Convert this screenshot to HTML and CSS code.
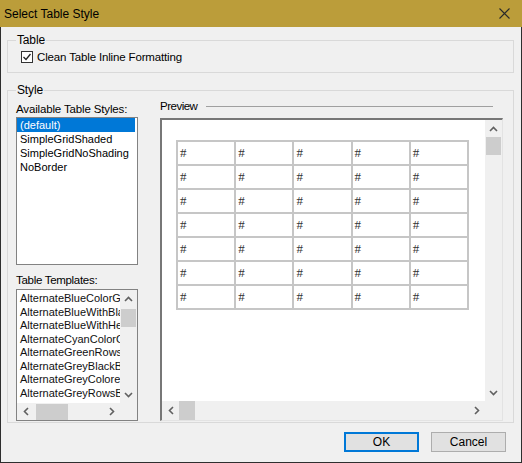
FILE: index.html
```html
<!DOCTYPE html>
<html>
<head>
<meta charset="utf-8">
<title>Select Table Style</title>
<link rel="stylesheet" href="styles.css">
</head>
<body>
<div class="window">
  <div class="titlebar">
    <span class="title">Select Table Style</span>
    <svg class="close" width="11" height="11" viewBox="0 0 11 11"><path d="M0.5 0.5 L10.5 10.5 M10.5 0.5 L0.5 10.5" stroke="#2a2a2a" stroke-width="1.1" fill="none"/></svg>
  </div>
  <div class="content">
    <fieldset class="group group-table">
      <legend>Table</legend>
      <label class="check">
        <svg class="checkbox" width="12" height="12" viewBox="0 0 12 12"><rect x="0.5" y="0.5" width="11" height="11" fill="#fff" stroke="#333"/><path d="M2.5 6 L5 8.5 L9.5 3" fill="none" stroke="#222" stroke-width="1.3"/></svg>
        <span>Clean Table Inline Formatting</span>
      </label>
    </fieldset>
    <fieldset class="group group-style">
      <legend>Style</legend>
      <div class="style-inner">
        <div class="leftcol">
          <div class="lbl">Available Table Styles:</div>
          <div class="listbox styles">
            <div class="item selected">(default)</div>
            <div class="item">SimpleGridShaded</div>
            <div class="item">SimpleGridNoShading</div>
            <div class="item">NoBorder</div>
          </div>
          <div class="lbl lbl2">Table Templates:</div>
          <div class="listbox templates">
            <div class="tpl-items">
              <div class="item">AlternateBlueColorGrid</div>
              <div class="item">AlternateBlueWithBlackBorder</div>
              <div class="item">AlternateBlueWithHeader</div>
              <div class="item">AlternateCyanColorGrid</div>
              <div class="item">AlternateGreenRows</div>
              <div class="item">AlternateGreyBlackBorder</div>
              <div class="item">AlternateGreyColoredGrid</div>
              <div class="item">AlternateGreyRowsBorder</div>
            </div>
            <div class="vscroll">
              <div class="arrow"><svg width="9" height="6" viewBox="0 0 9 6"><path d="M1 5 L4.5 1.5 L8 5" fill="none" stroke="#606060" stroke-width="1.6"/></svg></div>
              <div class="track"><div class="vthumb tpl-vthumb"></div></div>
              <div class="arrow"><svg width="9" height="6" viewBox="0 0 9 6"><path d="M1 1 L4.5 4.5 L8 1" fill="none" stroke="#606060" stroke-width="1.6"/></svg></div>
            </div>
            <div class="hscroll">
              <div class="arrow"><svg width="6" height="9" viewBox="0 0 6 9"><path d="M5 1 L1.5 4.5 L5 8" fill="none" stroke="#606060" stroke-width="1.6"/></svg></div>
              <div class="htrack"><div class="hthumb tpl-hthumb"></div></div>
              <div class="arrow"><svg width="6" height="9" viewBox="0 0 6 9"><path d="M1 1 L4.5 4.5 L1 8" fill="none" stroke="#606060" stroke-width="1.6"/></svg></div>
            </div>
            <div class="corner"></div>
          </div>
        </div>
        <div class="rightcol">
          <div class="preview-head"><span class="preview-title">Preview</span><span class="rule"></span></div>
          <div class="preview">
            <div class="preview-content">
              <table class="ptable">
                <tr><td>#</td><td>#</td><td>#</td><td>#</td><td>#</td></tr>
                <tr><td>#</td><td>#</td><td>#</td><td>#</td><td>#</td></tr>
                <tr><td>#</td><td>#</td><td>#</td><td>#</td><td>#</td></tr>
                <tr><td>#</td><td>#</td><td>#</td><td>#</td><td>#</td></tr>
                <tr><td>#</td><td>#</td><td>#</td><td>#</td><td>#</td></tr>
                <tr><td>#</td><td>#</td><td>#</td><td>#</td><td>#</td></tr>
                <tr><td>#</td><td>#</td><td>#</td><td>#</td><td>#</td></tr>
              </table>
            </div>
            <div class="vscroll">
              <div class="arrow"><svg width="9" height="6" viewBox="0 0 9 6"><path d="M1 5 L4.5 1.5 L8 5" fill="none" stroke="#606060" stroke-width="1.6"/></svg></div>
              <div class="track"><div class="vthumb"></div></div>
              <div class="arrow"><svg width="9" height="6" viewBox="0 0 9 6"><path d="M1 1 L4.5 4.5 L8 1" fill="none" stroke="#606060" stroke-width="1.6"/></svg></div>
            </div>
            <div class="hscroll">
              <div class="arrow"><svg width="6" height="9" viewBox="0 0 6 9"><path d="M5 1 L1.5 4.5 L5 8" fill="none" stroke="#606060" stroke-width="1.6"/></svg></div>
              <div class="htrack"><div class="hthumb"></div></div>
              <div class="arrow"><svg width="6" height="9" viewBox="0 0 6 9"><path d="M1 1 L4.5 4.5 L1 8" fill="none" stroke="#606060" stroke-width="1.6"/></svg></div>
            </div>
            <div class="corner"></div>
          </div>
        </div>
      </div>
    </fieldset>
    <div class="buttons">
      <button class="btn ok">OK</button>
      <button class="btn">Cancel</button>
    </div>
  </div>
</div>
</body>
</html>
```
FILE: styles.css
```css
* { box-sizing: border-box; }
html, body { margin: 0; padding: 0; }
body {
  font-family: "Liberation Sans", Arial, sans-serif;
  font-size: 11.5px;
  letter-spacing: -0.15px;
  color: #000;
  background: #fff;
}
.window {
  width: 522px;
  height: 463px;
  border: 1px solid #2e2e2e;
  border-top: 0;
  background: #f0f0f0;
  display: flex;
  flex-direction: column;
}
.titlebar {
  height: 27px;
  flex: none;
  margin: 0 -1px;
  background: #bb9d3a;
  display: flex;
  align-items: center;
  justify-content: space-between;
  padding: 0 12px 0 4px;
}
.title { font-size: 12px; line-height: 14px; letter-spacing: 0; }
.close { display: block; }
.content {
  flex: 1;
  display: flex;
  flex-direction: column;
  padding: 0 7px 0 6px;
}
.group {
  margin: 0;
  min-width: 0;
  border: 1px solid #d9d9d9;
}
.group legend {
  padding: 0 1px;
  font-size: 12px;
  line-height: 14px;
}
.group-table {
  margin-top: 6px;
  padding: 3px 8px 8px 8px;
}
.check {
  display: flex;
  align-items: center;
  height: 14px;
  margin-left: 5px;
  gap: 4px;
}
.checkbox { display: block; flex: none; }
.group-style {
  margin-top: 10px;
  padding: 2px 10px 1px 8px;
  flex: none;
}
.style-inner {
  display: flex;
  gap: 22px;
  height: 322px;
}
.leftcol {
  width: 122px;
  flex: none;
  display: flex;
  flex-direction: column;
  padding-top: 3px;
}
.lbl {
  height: 14px;
  line-height: 14px;
  margin-bottom: 1px;
  white-space: nowrap;
}
.lbl2 { margin-top: 8px; margin-bottom: 2px; letter-spacing: -0.3px; }
.listbox {
  border: 1px solid #828282;
  background: #fff;
  font-size: 11px;
  letter-spacing: 0;
  overflow: hidden;
}
.styles { height: 148px; }
.styles .item {
  height: 14px;
  line-height: 14px;
  padding-left: 3px;
  margin-right: 2px;
  white-space: nowrap;
}
.selected { background: #0078d7; color: #fff; }
.templates {
  height: 132px;
  display: grid;
  grid-template-columns: 1fr 17px;
  grid-template-rows: 1fr 17px;
}
.tpl-items {
  overflow: hidden;
  padding-top: 2px;
  color: #111;
}
.tpl-items .item {
  height: 13.5px;
  line-height: 13.5px;
  padding-left: 3px;
  white-space: nowrap;
}
.vscroll {
  background: #f0f0f0;
  display: flex;
  flex-direction: column;
}
.hscroll {
  background: #f0f0f0;
  display: flex;
}
.arrow {
  flex: none;
  width: 17px;
  height: 17px;
  display: flex;
  align-items: center;
  justify-content: center;
}
.vscroll .arrow { width: auto; }
.hscroll .arrow { height: auto; }
.track { flex: 1; }
.htrack { flex: 1; display: flex; }
.vthumb {
  height: 18px;
  margin: 0 1px;
  background: #cdcdcd;
}
.tpl-vthumb { margin-top: 2px; }
.hthumb {
  width: 16px;
  margin: 0;
  background: #cdcdcd;
}
.tpl-hthumb { width: 32px; margin: 1px 0 0 2px; }
.corner { background: #f0f0f0; }
.rightcol {
  flex: 1;
  min-width: 0;
  display: flex;
  flex-direction: column;
}
.preview-head {
  display: flex;
  align-items: center;
  height: 14px;
  line-height: 14px;
  gap: 9px;
  margin-right: 10px;
  margin-bottom: 5px;
}
.preview-title { letter-spacing: -0.5px; }
.rule { flex: 1; height: 1px; background: #a0a0a0; }
.preview {
  flex: 1;
  min-height: 0;
  background: #fff;
  border-left: 2px solid #777;
  border-top: 2px solid #777;
  border-right: 1px solid #e3e3e3;
  border-bottom: 1px solid #e3e3e3;
  display: grid;
  grid-template-columns: 1fr 17px;
  grid-template-rows: 1fr 19px;
}
.preview-content {
  overflow: hidden;
  padding: 20px 0 0 14px;
}
.ptable {
  border-collapse: collapse;
  width: 293px;
}
.ptable tr { height: 24px; }
.ptable td {
  border: 2px solid #c6c6c6;
  width: 58px;
  padding: 0 0 0 2px;
  font-family: "Liberation Serif", "Times New Roman", serif;
  font-size: 13px;
  letter-spacing: 0;
  color: #333;
  vertical-align: middle;
}
.buttons {
  display: flex;
  justify-content: flex-end;
  gap: 12px;
  margin-top: 9px;
  padding-right: 8px;
}
.btn {
  width: 75px;
  height: 20px;
  padding: 0;
  font-family: "Liberation Sans", Arial, sans-serif;
  font-size: 12px;
  color: #000;
  background: #e1e1e1;
  border: 1px solid #adadad;
}
.btn.ok { border: 2px solid #0078d7; }
```
